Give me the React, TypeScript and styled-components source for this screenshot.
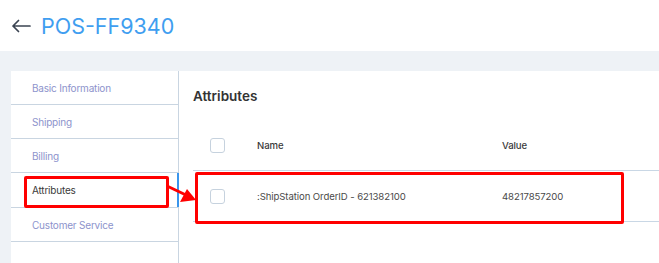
import React from "react";
import styled, { createGlobalStyle } from "styled-components";

const Global = createGlobalStyle`
  html, body { margin: 0; padding: 0; }
  body {
    width: 659px;
    height: 263px;
    overflow: hidden;
    background: #eef2f6;
    font-family: "Inter", "Noto Sans", sans-serif;
  }
`;

const Page = styled.div`
  display: flex;
  flex-direction: column;
  height: 263px;
  position: relative;
`;

const Header = styled.header`
  height: 51px;
  background: #ffffff;
  display: flex;
  align-items: center;
  padding-left: 10px;
  gap: 10px;
  box-sizing: border-box;
`;

const BackButton = styled.span`
  display: flex;
  width: 21px;
  height: 21px;
  align-items: center;
  justify-content: center;
  margin-top: 1px;
`;

const Title = styled.h1`
  margin: 0;
  font-size: 21.5px;
  font-weight: 400;
  color: #3f9ef0;
  letter-spacing: 0;
`;

const Body = styled.div`
  flex: 1;
  display: flex;
  padding: 20px 0 0 11px;
  min-height: 0;
`;

const Sidebar = styled.nav`
  width: 167px;
  background: #ffffff;
  border-right: 1px solid #c9d5e1;
  display: flex;
  flex-direction: column;
`;

const NavItem = styled.div<{ $active?: boolean }>`
  height: ${(p) => (p.$active ? "35px" : "34px")};
  box-sizing: border-box;
  border-bottom: 1px solid #c9d5e1;
  display: flex;
  align-items: center;
  padding-left: 21px;
  font-size: 10px;
  letter-spacing: -0.2px;
  color: ${(p) => (p.$active ? "#3a3a3a" : "#8d93cc")};
  position: relative;
  ${(p) =>
    p.$active
      ? `&::after { content: ""; position: absolute; right: -1px; top: 0; bottom: 0; width: 2px; background: #3a95ec; }`
      : ""}
`;

const Main = styled.main`
  flex: 1;
  background: #ffffff;
  padding: 15px 0 0 14px;
`;

const Heading = styled.h2`
  margin: 0;
  font-size: 13.5px;
  font-weight: 600;
  color: #333;
  height: 20px;
  line-height: 20px;
`;

const Table = styled.div`
  margin-top: 14px;
  display: flex;
  flex-direction: column;
`;

const Row = styled.div<{ $head?: boolean }>`
  display: grid;
  grid-template-columns: 64px 245px 1fr;
  align-items: center;
  height: 51px;
  box-sizing: border-box;
  border-bottom: 1px solid #c9d7e5;
  font-size: 9.6px;
  letter-spacing: -0.1px;
  color: ${(p) => (p.$head ? "#3a3a3a" : "#4a4a4a")};
  font-weight: ${(p) => (p.$head ? 500 : 400)};
`;

const CheckCell = styled.div`
  padding-left: 17px;
  display: flex;
  align-items: center;
`;

const Checkbox = styled.span`
  width: 15px;
  height: 15px;
  box-sizing: border-box;
  border: 1px solid #c6d2de;
  border-radius: 3px;
  background: #fff;
`;

const Cell = styled.div``;

const Annotation = styled.div`
  position: absolute;
  border: 3px solid #ff0000;
  border-radius: 2px;
  box-sizing: border-box;
  pointer-events: none;
`;

const ArrowSvg = styled.svg`
  position: absolute;
  left: 160px;
  top: 178px;
  overflow: visible;
`;

export default function App() {
  return (
    <>
      <Global />
      <Page>
        <Header>
          <BackButton>
            <svg width="20" height="14" viewBox="0 0 20 14" fill="none">
              <path d="M19 7H2M7.5 1.5L2 7l5.5 5.5" stroke="#3b4452" strokeWidth="1.7" strokeLinecap="round" strokeLinejoin="round" />
            </svg>
          </BackButton>
          <Title>POS-FF9340</Title>
        </Header>
        <Body>
          <Sidebar>
            <NavItem>Basic Information</NavItem>
            <NavItem>Shipping</NavItem>
            <NavItem>Billing</NavItem>
            <NavItem $active>Attributes</NavItem>
            <NavItem>Customer Service</NavItem>
          </Sidebar>
          <Main>
            <Heading>Attributes</Heading>
            <Table>
              <Row $head>
                <CheckCell><Checkbox /></CheckCell>
                <Cell>Name</Cell>
                <Cell>Value</Cell>
              </Row>
              <Row>
                <CheckCell><Checkbox /></CheckCell>
                <Cell>:ShipStation OrderID - 621382100</Cell>
                <Cell>48217857200</Cell>
              </Row>
            </Table>
          </Main>
        </Body>
        <Annotation style={{ left: 24, top: 176, width: 145, height: 32 }} />
        <Annotation style={{ left: 195, top: 172, width: 429, height: 52 }} />
        <ArrowSvg width="40" height="30" viewBox="0 0 40 30">
          <line x1="7" y1="8" x2="26" y2="17" stroke="#ff0000" strokeWidth="3" />
          <polygon points="36,22 20,24 27,11" fill="#ff0000" />
        </ArrowSvg>
      </Page>
    </>
  );
}
